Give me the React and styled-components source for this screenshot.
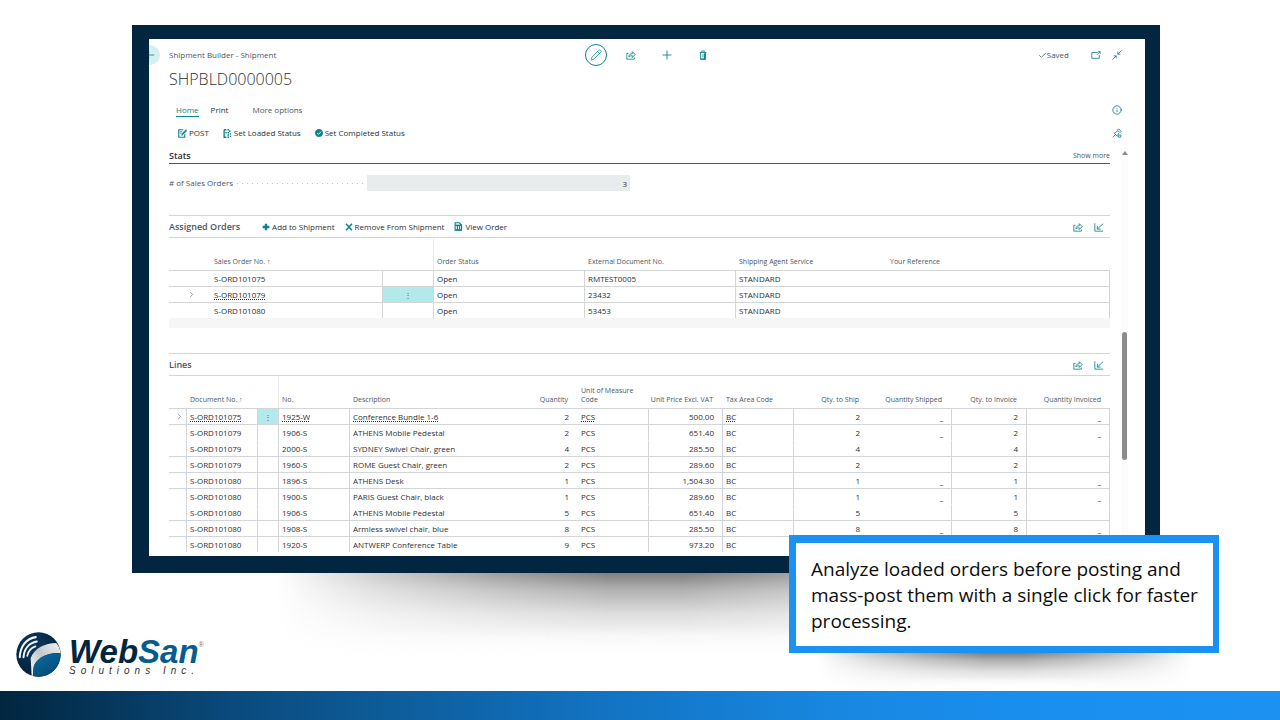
import React from "react";
import styled, { createGlobalStyle } from "styled-components";
import { Pencil, Plus, Info, Check, ChevronRight } from "lucide-react";

const teal = "#0a8489";
const slate = "#4b5766";
const rule = "#d3d5d6";

const GlobalStyle = createGlobalStyle`
  * { box-sizing: border-box; }
  body {
    margin: 0;
    background: #fff;
    font-family: "Open Sans", "Noto Sans", sans-serif;
    font-size: 8px;
    line-height: 12px;
    color: #2c2f33;
  }
  button, input { font: inherit; color: inherit; margin: 0; padding: 0; border: 0; background: none; }
  button { cursor: pointer; }
  h1, h2, p { margin: 0; }
  a { color: inherit; text-decoration: none; }
  svg { display: block; flex: none; }
`;

const Slide = styled.main`
  min-height: 100vh;
  display: flex;
  flex-direction: column;
  overflow: hidden;
`;

const Stage = styled.section`
  position: relative;
  margin: 25px 120px 0 132px;
`;

const Frame = styled.div`
  position: relative;
  padding: 14px 15px 17px 17px;
  background: #02263f;
`;

const Shadow = styled.div`
  position: absolute;
  top: 100%;
  left: ${(p) => p.$inset};
  right: ${(p) => p.$inset};
  height: ${(p) => p.$depth};
  background:
    radial-gradient(ellipse 60% 50% at 50% 110%, #fff 20%, transparent 100%),
    linear-gradient(rgba(0, 0, 0, 0.5), rgba(0, 0, 0, 0.3) 20%, rgba(0, 0, 0, 0.13) 48%, rgba(0, 0, 0, 0.04) 75%, transparent);
  mask-image: linear-gradient(90deg, transparent, rgba(0, 0, 0, 0.4) 14%, rgba(0, 0, 0, 0.75) 30%, #000 45%, #000 55%, rgba(0, 0, 0, 0.75) 70%, rgba(0, 0, 0, 0.4) 86%, transparent);
`;

const Screen = styled.div`
  background: #fff;
  overflow: hidden;
`;

const TopBar = styled.header`
  display: grid;
  grid-template-columns: 1fr auto 1fr;
  align-items: center;
  height: 32px;
`;

const Crumb = styled.div`
  display: flex;
  align-items: center;
  gap: 9px;
  color: ${slate};
`;

const BackButton = styled.button`
  display: flex;
  align-items: center;
  justify-content: center;
  width: 20px;
  height: 20px;
  margin-left: -9px;
  border-radius: 50%;
  background: #d4f1f1;
  color: ${teal};
`;

const Tools = styled.div`
  display: flex;
  align-items: center;
  gap: 24px;
  color: ${teal};
`;

const IconButton = styled.button`
  display: flex;
  align-items: center;
  justify-content: center;
  width: ${(p) => (p.$ring ? "22px" : "12px")};
  height: ${(p) => (p.$ring ? "22px" : "12px")};
  margin-right: ${(p) => (p.$ring ? "-6px" : "0")};
  border: ${(p) => (p.$ring ? `1px solid ${teal}` : "0")};
  border-radius: ${(p) => (p.$ring ? "50%" : "0")};
  color: ${teal};
`;

const StatusTools = styled.div`
  display: flex;
  align-items: center;
  justify-content: flex-end;
  gap: 9px;
  padding-right: 22px;
`;

const Saved = styled.span`
  display: flex;
  align-items: center;
  margin-right: 12px;
  color: ${slate};
`;

const Title = styled.h1`
  padding-left: 20px;
  font-size: 16px;
  line-height: 16px;
  font-weight: 300;
`;

const Bar = styled.nav`
  display: flex;
  align-items: center;
  height: 14px;
  margin-top: ${(p) => p.$top};
  padding: 0 22px 0 ${(p) => p.$left};
  gap: ${(p) => p.$gap};

  & > :last-child { margin-left: auto; }
`;

const Tab = styled.button`
  height: 13px;
  line-height: 12px;
  border-bottom: 1px solid ${(p) => (p.$active ? teal : "transparent")};
  color: ${(p) => (p.$active ? teal : p.$muted ? slate : "inherit")};
  margin-left: ${(p) => (p.$muted ? "12px" : "0")};
`;

const Action = styled.button`
  display: flex;
  align-items: center;
  gap: 2px;

  svg { color: ${teal}; }
`;

const Body = styled.div`
  display: flex;
  margin-top: 7px;
  padding: 0 17px 0 20px;
  gap: 11px;
`;

const Content = styled.div`
  flex: 1;
  min-width: 0;
  padding-bottom: 4px;
`;

const ScrollTrack = styled.div`
  display: flex;
  flex-direction: column;
  align-items: center;
  width: 7px;
  padding-top: 4px;
  background: #fcfcfc;
`;

const ScrollThumb = styled.div`
  width: 5px;
  height: 128px;
  margin-top: 177px;
  border-radius: 3px;
  background: #8c8c8c;
`;

const StatsHead = styled.div`
  display: flex;
  align-items: center;
  justify-content: space-between;
  height: 17px;
  padding-top: 1px;
  border-bottom: 1px solid ${slate};
`;

const Heading = styled.h2`
  font-size: 9px;
  line-height: 12px;
  font-weight: 600;
  color: ${(p) => (p.$dark ? "#2c2f33" : slate)};
`;

const MoreLink = styled.a`
  font-size: 7px;
  color: ${slate};
`;

const Field = styled.div`
  display: flex;
  align-items: center;
  width: 49%;
  height: 16px;
  margin: 11px 0 24px;
  gap: 4px;

  label { color: ${slate}; }
`;

const Leader = styled.span`
  flex: 1;
  height: 1px;
  background: repeating-linear-gradient(90deg, #c4c8cc 0 1px, transparent 1px 5px);
`;

const ReadOnly = styled.input`
  width: 57%;
  height: 16px;
  padding-right: 3px;
  background: #e9ecec;
  text-align: right;
`;

const PartHead = styled.div`
  display: flex;
  align-items: center;
  height: 23px;
  border-top: 1px solid ${rule};
  border-bottom: 1px solid ${rule};
`;

const PartActions = styled.div`
  display: flex;
  gap: 10px;
  margin-left: 22px;
`;

const PartTools = styled.div`
  display: flex;
  gap: 9px;
  margin-left: auto;
  padding-right: 5px;
`;

const Grid = styled.table`
  width: 100%;
  table-layout: fixed;
  border-collapse: separate;
  border-spacing: 0;
`;

const Col = styled.col`
  width: ${(p) => p.$w || "auto"};
`;

const HeadCell = styled.th`
  height: 32px;
  padding: 0 ${(p) => (p.$num ? "9px" : "0")} 4px ${(p) => (p.$num ? "0" : "3px")};
  border-left: 1px solid ${(p) => (p.$split ? "#e8eaeb" : "transparent")};
  vertical-align: bottom;
  text-align: ${(p) => (p.$num ? "right" : "left")};
  font-size: 7px;
  line-height: 9px;
  font-weight: 400;
  color: ${slate};
  white-space: ${(p) => (p.$wrap ? "normal" : "nowrap")};
`;

const Cell = styled.td`
  height: 16px;
  padding: 0 ${(p) => (p.$num ? "8px" : "0")} 0 ${(p) => (p.$num ? "0" : p.$edge ? "3px" : "4px")};
  border-top: 1px solid ${(p) => (p.$plain ? "transparent" : rule)};
  border-left: ${(p) => (p.$edge ? `1px solid ${rule}` : "0")};
  text-align: ${(p) => (p.$num ? "right" : "left")};
  line-height: 12px;
  white-space: nowrap;
  background: ${(p) => (p.$on ? "#b2e9eb" : "transparent")};
  background-clip: ${(p) => (p.$on ? "padding-box" : "border-box")};

  &:last-child { border-right: 1px solid ${rule}; }
`;

const CellLink = styled.a`
  text-decoration: underline ${(p) => (p.$dash ? "none" : "dotted")};
  color: ${(p) => (p.$dash ? teal : "inherit")};
  font-weight: ${(p) => (p.$dash ? 700 : 400)};
`;

const Marker = styled.span`
  display: flex;
  justify-content: center;
  color: ${slate};
`;

const RowMenu = styled.button`
  display: block;
  width: 100%;
  padding-right: 3px;
  line-height: 12px;
  color: ${slate};
`;

const Filler = styled.div`
  height: 10px;
  margin-bottom: 25px;
  background: #f6f6f6;
`;

const Callout = styled.aside`
  position: absolute;
  right: -59px;
  bottom: -80px;
  width: 430px;
  padding: 13px 8px 12px 15px;
  border: solid #1b91f2;
  border-width: 8px 6px 7px 7px;
  background: #fff;
  color: #0d0d0d;
  font-size: 19px;
  line-height: 26px;
`;

const CalloutShadow = styled(Shadow)`
  top: calc(100% + 7px);
`;

const Brand = styled.div`
  display: flex;
  align-items: center;
  gap: 8px;
  margin: 59px 0 14px 16px;
`;

const Wordmark = styled.div`
  display: grid;
  grid-template-columns: auto auto;
  font-family: "Liberation Sans", Arial, sans-serif;
  font-style: italic;
`;

const BrandName = styled.strong`
  font-size: 33px;
  line-height: 32px;
  color: #02263f;

  span { color: #055c8e; }
`;

const Registered = styled.sup`
  padding-top: 5px;
  font-size: 7px;
  line-height: 8px;
  font-style: normal;
  color: #777;
`;

const BrandSub = styled.span`
  grid-column: 1 / -1;
  font-size: 10px;
  line-height: 6px;
  letter-spacing: 5px;
  color: #333;
`;

const BottomBar = styled.footer`
  position: relative;
  height: 29px;
  margin-top: auto;
  background: linear-gradient(90deg, #02263f, #0a4a7c 18%, #0e5d9b 31%, #1273c2 47%, #1887e0 65%, #1a8fef 82%, #1b91f2);
`;

const Svg = ({ size = 10, children }) => (
  <svg width={size} height={size} viewBox="0 0 12 12" fill="none" stroke="currentColor" strokeWidth="1" aria-hidden="true">
    {children}
  </svg>
);

const ShareIcon = () => (
  <Svg>
    <path d="M3 4H1v7h9V9" />
    <path d="M3.5 8.5c0-3 1.500-4 4-4V2L11 5.500 7.500 9V6.800c-2 0-3 .4-4 1.700z" />
  </Svg>
);
const TrashIcon = () => (
  <Svg>
    <path d="M2 3h8M4.500 3V1.200h3V3M3 3v8h6V3M6 5v4" />
    <path d="M8 4v7M3 10.800h6" strokeWidth="1.500" />
  </Svg>
);
const PopOutIcon = () => (
  <Svg>
    <path d="M8 3H1v7h9V6" />
    <path d="M7.500 5.500 11 2M8.500 2H11v2.500" />
  </Svg>
);
const CollapseIcon = () => (
  <Svg>
    <path d="M11.500.5 7 5M7 2v3h3M.5 11.500 5 7M2 7h3v3" />
  </Svg>
);
const PinIcon = () => (
  <Svg>
    <path d="M1 11l3.500-3.500M2 5.500 6.500 10M3 6l4-2.500M6.500 9 8 6M6.500 2.500 8 1l3 3-1.500 1.500z" />
    <path d="M7.500 8.500h3v2.500h-3z" />
  </Svg>
);
const PostIcon = () => (
  <Svg size={9}>
    <path d="M7 1H1v10h8V7" strokeWidth="1.500" />
    <path d="M2.500 3.500h3M2.500 5.500h2" />
    <path d="M5 8.500 5.500 6l5-5 1.200 1.200-5 5z" fill="currentColor" />
  </Svg>
);
const LoadedIcon = () => (
  <Svg size={9}>
    <path d="M1.500 1v10h3M1.500 1h3" strokeWidth="1.800" />
    <path d="M6 1h2M9 1.500v2.500M6 5h2M10 5.500v2M4 4v2M6 8h2M10 9v2M6 11h2" strokeWidth="1.800" />
  </Svg>
);
const DoneIcon = () => (
  <Svg size={8}>
    <circle cx="6" cy="6" r="5.500" fill="currentColor" />
    <path d="M3.200 6.200 5.200 8.200 9 4" stroke="#fff" strokeWidth="1.300" />
  </Svg>
);
const AddIcon = () => (
  <Svg size={8}>
    <path d="M6 1v10M1 6h10" strokeWidth="3.500" />
  </Svg>
);
const RemoveIcon = () => (
  <Svg size={8}>
    <path d="M1.500 1 10.500 11M10.500 1 1.500 11" strokeWidth="2.200" />
  </Svg>
);
const ViewIcon = () => (
  <Svg size={9}>
    <path d="M1.500 11V1H7l3 3v7z" strokeWidth="1.500" />
    <path d="M1.500 4.500h9" strokeWidth="2" />
    <path d="M4.500 5v5M7.500 5v5M2 10.500h8" strokeWidth="1.500" />
  </Svg>
);
const ExpandIcon = () => (
  <Svg>
    <path d="M1 1.500v9.500h10" />
    <path d="M4 4.500v4h4M4 8.500l7-6.500" />
  </Svg>
);

const Globe = () => (
  <svg width="45" height="45" viewBox="0 0 132 132" aria-hidden="true">
    <defs>
      <radialGradient id="globe" cx="0.400" cy="0.300" r="0.750">
        <stop offset="0" stopColor="#0b3a60" />
        <stop offset="1" stopColor="#011d36" />
      </radialGradient>
      <linearGradient id="swoosh" x1="0" y1="1" x2="1" y2="0">
        <stop offset="0" stopColor="#fff" />
        <stop offset="0.500" stopColor="#c4c7ca" />
        <stop offset="1" stopColor="#f2f2f2" />
      </linearGradient>
      <linearGradient id="sea" x1="0" y1="0" x2="0.600" y2="1">
        <stop offset="0" stopColor="#0a6fa3" />
        <stop offset="1" stopColor="#034a78" />
      </linearGradient>
    </defs>
    <circle cx="66" cy="66" r="65" fill="url(#globe)" />
    <path d="M46 128 43 76C55 46 85 33 118 32c7 8 12 18 12 30-38-3-68 14-78 40l-3 27z" fill="url(#swoosh)" />
    <path d="M131 63C92 60 55 78 51 106l-1 23c42 10 81-20 81-66z" fill="url(#sea)" />
    <g fill="none" stroke="#f4f6f8" strokeLinecap="round">
      <path d="M11 74C12 44 30 18 58 15" strokeWidth="6" />
      <path d="M22 74C24 50 38 32 61 28" strokeWidth="6" />
      <path d="M33 70C36 56 44 46 57 42" strokeWidth="5" />
    </g>
  </svg>
);

const orderCols = [
  { w: "41px" },
  { w: "172px", label: "Sales Order No. ↑" },
  { w: "51px" },
  { w: "151px", label: "Order Status", split: true },
  { w: "151px", label: "External Document No." },
  { w: "151px", label: "Shipping Agent Service" },
  { label: "Your Reference" },
];

const orders = [
  ["S-ORD101075", "Open", "RMTEST0005", "STANDARD"],
  ["S-ORD101079", "Open", "23432", "STANDARD"],
  ["S-ORD101080", "Open", "53453", "STANDARD"],
];

const lineCols = [
  { w: "17px" },
  { w: "71px", label: "Document No. ↑" },
  { w: "21px" },
  { w: "71px", label: "No.", split: true },
  { label: "Description" },
  { w: "57px", label: "Quantity", num: true },
  { w: "71px", label: "Unit of Measure Code", wrap: true },
  { w: "74px", label: "Unit Price Excl. VAT", num: true },
  { w: "71px", label: "Tax Area Code" },
  { w: "75px", label: "Qty. to Ship", num: true },
  { w: "83px", label: "Quantity Shipped", num: true },
  { w: "75px", label: "Qty. to Invoice", num: true },
  { w: "84px", label: "Quantity Invoiced", num: true },
];

const lines = [
  { doc: "S-ORD101075", no: "1925-W", text: "Conference Bundle 1-6", qty: 2, price: "500.00", dash: true },
  { doc: "S-ORD101079", no: "1906-S", text: "ATHENS Mobile Pedestal", qty: 2, price: "651.40", dash: true },
  { doc: "S-ORD101079", no: "2000-S", text: "SYDNEY Swivel Chair, green", qty: 4, price: "285.50", plain: true },
  { doc: "S-ORD101079", no: "1960-S", text: "ROME Guest Chair, green", qty: 2, price: "289.60" },
  { doc: "S-ORD101080", no: "1896-S", text: "ATHENS Desk", qty: 1, price: "1,504.30", dash: true },
  { doc: "S-ORD101080", no: "1900-S", text: "PARIS Guest Chair, black", qty: 1, price: "289.60", dash: true },
  { doc: "S-ORD101080", no: "1906-S", text: "ATHENS Mobile Pedestal", qty: 5, price: "651.40", plain: true },
  { doc: "S-ORD101080", no: "1908-S", text: "Armless swivel chair, blue", qty: 8, price: "285.50", dash: true },
  { doc: "S-ORD101080", no: "1920-S", text: "ANTWERP Conference Table", qty: 9, price: "973.20" },
];

const TableHead = ({ cols }) => (
  <>
    <colgroup>
      {cols.map((c, i) => <Col key={i} $w={c.w} />)}
    </colgroup>
    <thead>
      <tr>
        {cols.map((c, i) => (
          <HeadCell key={i} scope="col" $num={c.num} $split={c.split} $wrap={c.wrap}>{c.label}</HeadCell>
        ))}
      </tr>
    </thead>
  </>
);

const Linked = ({ on, children }) => (on ? <CellLink href="#record">{children}</CellLink> : children);

const RowMarker = () => <Marker><ChevronRight size={9} strokeWidth={1.5} /></Marker>;

const PartToolButtons = () => (
  <PartTools>
    <IconButton aria-label="Share"><ShareIcon /></IconButton>
    <IconButton aria-label="Expand"><ExpandIcon /></IconButton>
  </PartTools>
);

const OrdersTable = () => (
  <Grid>
    <TableHead cols={orderCols} />
    <tbody>
      {orders.map(([no, status, ext, agent], i) => {
        const on = i === 1;
        return (
          <tr key={no}>
            <Cell>{on && <RowMarker />}</Cell>
            <Cell><Linked on={on}>{no}</Linked></Cell>
            <Cell $edge $on={on}>{on && <RowMenu aria-label="Row menu">⋮</RowMenu>}</Cell>
            <Cell $edge>{status}</Cell>
            <Cell $edge>{ext}</Cell>
            <Cell $edge>{agent}</Cell>
            <Cell />
          </tr>
        );
      })}
    </tbody>
  </Grid>
);

const LinesTable = () => (
  <Grid>
    <TableHead cols={lineCols} />
    <tbody>
      {lines.map((l, i) => {
        const on = i === 0;
        const dash = l.dash ? <CellLink href="#entries" $dash>_</CellLink> : null;
        return (
          <tr key={i}>
            <Cell $plain={l.plain}>{on && <RowMarker />}</Cell>
            <Cell $plain={l.plain} $edge><Linked on={on}>{l.doc}</Linked></Cell>
            <Cell $plain={l.plain} $edge $on={on}>{on && <RowMenu aria-label="Row menu">⋮</RowMenu>}</Cell>
            <Cell $plain={l.plain} $edge><Linked on={on}>{l.no}</Linked></Cell>
            <Cell $plain={l.plain} $edge><Linked on={on}>{l.text}</Linked></Cell>
            <Cell $plain={l.plain} $num>{l.qty}</Cell>
            <Cell $plain={l.plain}><Linked on={on}>PCS</Linked></Cell>
            <Cell $plain={l.plain} $edge $num>{l.price}</Cell>
            <Cell $plain={l.plain} $edge><Linked on={on}>BC</Linked></Cell>
            <Cell $plain={l.plain} $edge $num>{l.qty}</Cell>
            <Cell $plain={l.plain} $num>{dash}</Cell>
            <Cell $plain={l.plain} $edge $num>{l.qty}</Cell>
            <Cell $plain={l.plain} $edge $num>{dash}</Cell>
          </tr>
        );
      })}
    </tbody>
  </Grid>
);

export default function App() {
  return (
    <Slide>
      <GlobalStyle />
      <Stage>
        <Shadow $inset="14%" $depth="86px" />
        <Frame>
          <Screen>
            <TopBar>
              <Crumb>
                <BackButton aria-label="Back"><Svg><path d="M11 6H2M5 3 2 6l3 3" /></Svg></BackButton>
                Shipment Builder - Shipment
              </Crumb>
              <Tools>
                <IconButton $ring aria-label="Edit"><Pencil size={12} strokeWidth={1.5} /></IconButton>
                <IconButton aria-label="Share"><ShareIcon /></IconButton>
                <IconButton aria-label="New"><Plus size={14} strokeWidth={1.5} /></IconButton>
                <IconButton aria-label="Delete"><TrashIcon /></IconButton>
              </Tools>
              <StatusTools>
                <Saved><Check size={9} strokeWidth={2} />Saved</Saved>
                <IconButton aria-label="Open in new window"><PopOutIcon /></IconButton>
                <IconButton aria-label="Collapse"><CollapseIcon /></IconButton>
              </StatusTools>
            </TopBar>
            <Title>SHPBLD0000005</Title>
            <Bar $top="16px" $left="27px" $gap="12px" aria-label="Tabs">
              <Tab $active>Home</Tab>
              <Tab>Print</Tab>
              <Tab $muted>More options</Tab>
              <IconButton aria-label="Details"><Info size={10} strokeWidth={2} /></IconButton>
            </Bar>
            <Bar $top="9px" $left="29px" $gap="14px" aria-label="Actions">
              <Action><PostIcon />POST</Action>
              <Action><LoadedIcon />Set Loaded Status</Action>
              <Action><DoneIcon />Set Completed Status</Action>
              <IconButton aria-label="Pin"><PinIcon /></IconButton>
            </Bar>
            <Body>
              <Content>
                <StatsHead>
                  <Heading $dark>Stats</Heading>
                  <MoreLink href="#more">Show more</MoreLink>
                </StatsHead>
                <Field>
                  <label htmlFor="order-count"># of Sales Orders</label>
                  <Leader />
                  <ReadOnly id="order-count" readOnly value="3" />
                </Field>
                <PartHead>
                  <Heading>Assigned Orders</Heading>
                  <PartActions>
                    <Action><AddIcon />Add to Shipment</Action>
                    <Action><RemoveIcon />Remove From Shipment</Action>
                    <Action><ViewIcon />View Order</Action>
                  </PartActions>
                  <PartToolButtons />
                </PartHead>
                <OrdersTable />
                <Filler />
                <PartHead>
                  <Heading>Lines</Heading>
                  <PartToolButtons />
                </PartHead>
                <LinesTable />
              </Content>
              <ScrollTrack>
                <svg width="6" height="4" viewBox="0 0 6 4" aria-hidden="true"><path d="M3 0 6 4H0z" fill="#8c8c8c" /></svg>
                <ScrollThumb />
              </ScrollTrack>
            </Body>
          </Screen>
        </Frame>
        <Callout>
          <p>Analyze loaded orders before posting and mass-post them with a single click for faster processing.</p>
          <CalloutShadow $inset="5%" $depth="38px" />
        </Callout>
      </Stage>
      <Brand>
        <Globe />
        <Wordmark>
          <BrandName>Web<span>San</span></BrandName>
          <Registered>®</Registered>
          <BrandSub>Solutions Inc.</BrandSub>
        </Wordmark>
      </Brand>
      <BottomBar />
    </Slide>
  );
}
